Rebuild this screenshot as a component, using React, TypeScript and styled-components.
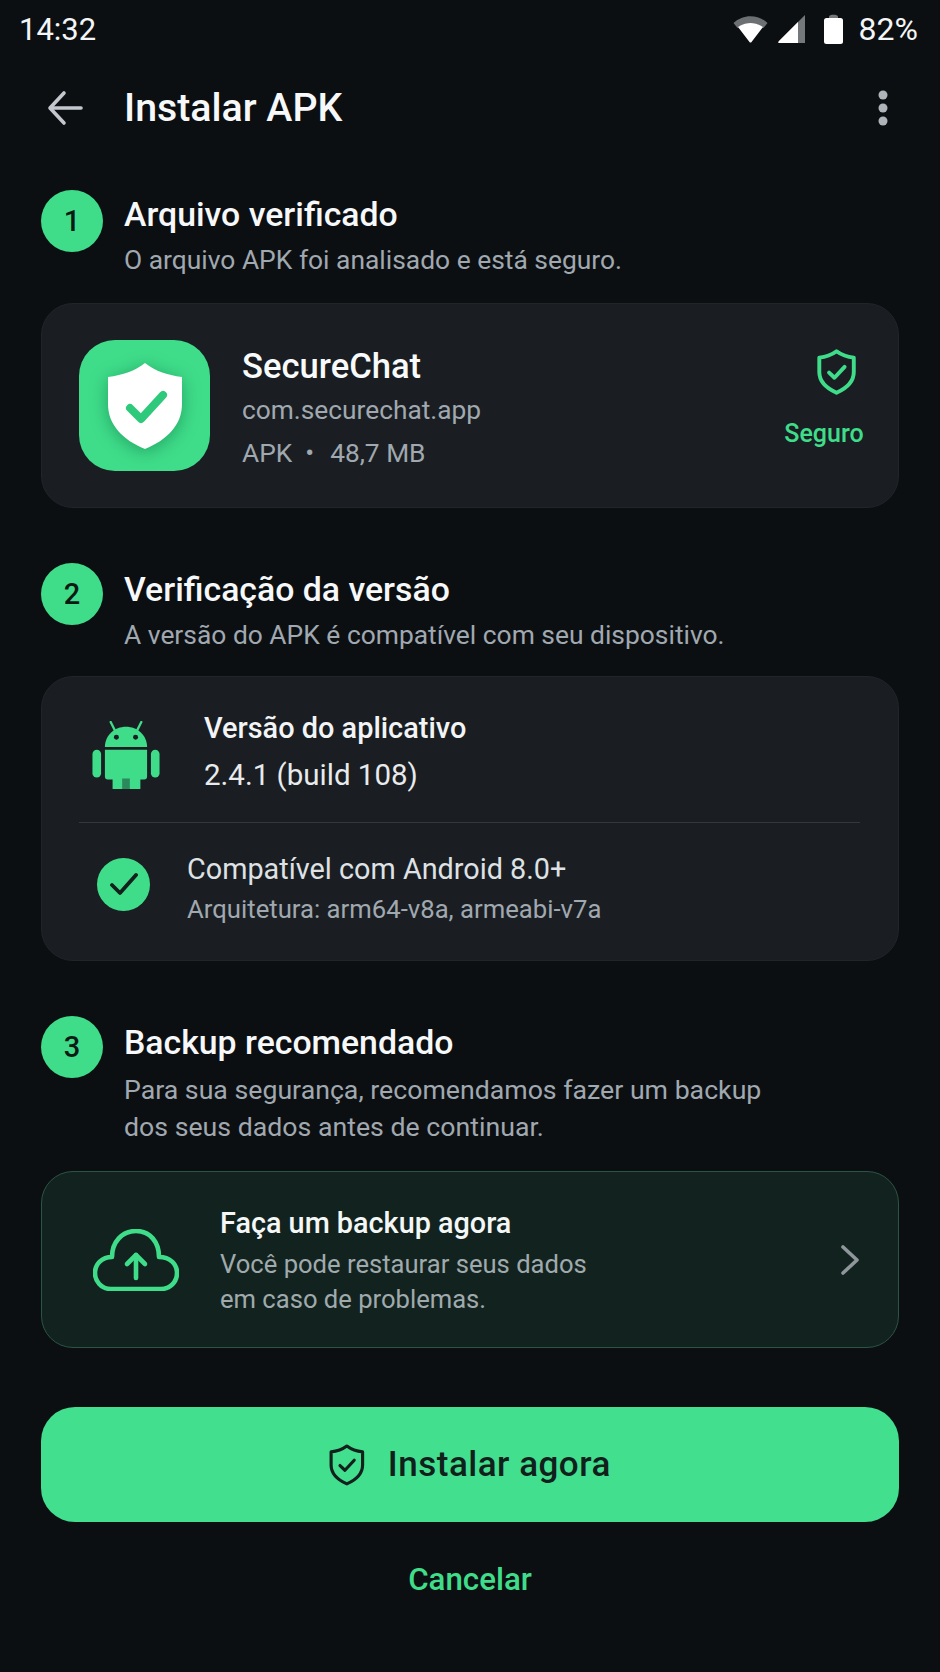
import React from 'react';
import styled, { createGlobalStyle } from 'styled-components';

const green = '#3fdd8a';

const GlobalStyle = createGlobalStyle`
    html, body {
        margin: 0;
        padding: 0;
        background: #0c0f12;
    }
    * {
        box-sizing: border-box;
    }
`;

const Page = styled.div`
    width: 940px;
    height: 1672px;
    background: #0c0f12;
    color: #fff;
    font-family: Roboto, 'Liberation Sans', sans-serif;
    overflow: hidden;
`;

const StatusBar = styled.div`
    height: 54px;
    padding: 4px 22px 0 19px;
    display: flex;
    align-items: center;
    justify-content: space-between;
    font-size: 31px;
    color: #f4f5f6;
`;

const StatusIcons = styled.div`
    display: flex;
    align-items: center;
`;

const CellIcon = styled.svg`
    margin-left: 10px;
`;

const BatteryIcon = styled.svg`
    margin-left: 19px;
`;

const BatteryText = styled.span`
    margin-left: 16px;
    font-size: 32px;
`;

const Header = styled.header`
    height: 76px;
    margin-top: 16px;
    padding: 0 52px 0 47px;
    display: flex;
    align-items: center;
    justify-content: space-between;
`;

const HeaderLeft = styled.div`
    display: flex;
    align-items: center;
    gap: 41px;
`;

const HeaderTitle = styled.h1`
    margin: 0;
    font-size: 39.3px;
    font-weight: 500;
    color: #f7f8f9;
`;

const Content = styled.main`
    padding: 44px 41px 0;
`;

const Step = styled.section<{ $top?: number }>`
    margin-top: ${(p) => p.$top ?? 0}px;
    display: flex;
    gap: 21px;
`;

const StepBadge = styled.div`
    flex: none;
    width: 62px;
    height: 62px;
    border-radius: 50%;
    background: ${green};
    color: #0d1a14;
    font-size: 29px;
    font-weight: 500;
    display: flex;
    align-items: center;
    justify-content: center;
`;

const StepText = styled.div<{ $pad?: number }>`
    padding-top: ${(p) => p.$pad ?? 8}px;
`;

const StepTitle = styled.h2`
    margin: 0;
    font-size: 33.8px;
    line-height: 38px;
    font-weight: 500;
    color: #f7f8f9;
`;

const StepDesc = styled.p<{ $gap?: number; $size?: number }>`
    margin: ${(p) => p.$gap ?? 8}px 0 0;
    font-size: ${(p) => p.$size ?? 26.4}px;
    line-height: 37px;
    color: #a0a8b0;
`;

const Card = styled.div`
    margin-top: 22px;
    background: #1a1e22;
    border: 1px solid #20252a;
    border-radius: 32px;
`;

const AppCard = styled(Card)`
    height: 205px;
    margin-top: 24px;
    padding: 36px 34px 0 37px;
    display: flex;
`;

const AppIcon = styled.div`
    flex: none;
    width: 131px;
    height: 131px;
    border-radius: 36px;
    background: ${green};
    display: flex;
    align-items: center;
    justify-content: center;
`;

const AppShield = styled.svg`
    filter: drop-shadow(0 3px 9px rgba(0, 90, 50, 0.45));
`;

const AppInfo = styled.div`
    flex: 1;
    margin-left: 32px;
    padding-top: 4px;
`;

const AppName = styled.div`
    font-size: 34.6px;
    line-height: 44px;
    font-weight: 500;
    color: #f9fafb;
`;

const AppMeta = styled.div`
    font-size: 26.3px;
    line-height: 41px;
    margin-top: 2px;
    color: #a0a8b0;
`;

const Dot = styled.span`
    margin: 0 16px 0 13px;
`;

const SafeBadge = styled.div`
    width: 80px;
    padding-top: 9px;
    display: flex;
    flex-direction: column;
    align-items: center;
    gap: 24px;
    color: ${green};
    font-size: 25px;
    font-weight: 500;
`;

const SafeShield = styled.div`
    margin-left: 26px;
    height: 46px;
`;

const VersionCard = styled(Card)`
    height: 285px;
    padding: 0 38px 0 37px;
`;

const VersionRow = styled.div`
    height: 146px;
    padding: 4px 0 0 13px;
    display: flex;
    align-items: center;
    gap: 44px;
    border-bottom: 1px solid #33383e;
`;

const AndroidIcon = styled.svg`
    margin-top: 7px;
`;

const RowLabel = styled.div`
    font-size: 28.9px;
    line-height: 36px;
    font-weight: 500;
    color: #f2f4f5;
`;

const RowValue = styled.div`
    font-size: 29.5px;
    line-height: 36px;
    margin-top: 11px;
    color: #e8eaec;
`;

const CompatRow = styled.div`
    height: 122px;
    padding: 0 0 0 18px;
    display: flex;
    align-items: center;
    gap: 37px;
`;

const CompatText = styled.div`
    padding-top: 7px;
`;

const CheckCircle = styled.div`
    flex: none;
    width: 53px;
    height: 53px;
    border-radius: 50%;
    background: ${green};
    display: flex;
    align-items: center;
    justify-content: center;
`;

const CompatTitle = styled.div`
    font-size: 28.8px;
    line-height: 36px;
    color: #dfe2e5;
`;

const CompatSub = styled.div`
    font-size: 25.7px;
    line-height: 32px;
    margin-top: 6px;
    color: #a0a8b0;
`;

const BackupCard = styled(Card)`
    height: 177px;
    margin-top: 25px;
    padding: 0 39px 0 51px;
    display: flex;
    align-items: center;
    background: #12231f;
    border-color: #2b5443;
`;

const BackupText = styled.div`
    flex: 1;
    margin-left: 41px;
    padding-top: 2px;
`;

const BackupTitle = styled.div`
    font-size: 28.8px;
    line-height: 36px;
    font-weight: 500;
    color: #f5f7f7;
`;

const BackupDesc = styled.div`
    font-size: 25.6px;
    line-height: 35px;
    margin-top: 6px;
    color: #a0aaad;
`;

const InstallButton = styled.button`
    width: 100%;
    height: 115px;
    margin-top: 59px;
    border: none;
    border-radius: 34px;
    background: #42df8f;
    color: #11201a;
    font-family: inherit;
    font-size: 35px;
    font-weight: 500;
    letter-spacing: 0.5px;
    display: flex;
    align-items: center;
    justify-content: center;
    gap: 23px;
`;

const CancelButton = styled.button`
    display: block;
    width: 100%;
    margin-top: 35px;
    border: none;
    background: none;
    color: ${green};
    font-family: inherit;
    font-size: 31.3px;
    line-height: 46px;
    font-weight: 500;
    padding: 0;
`;

const ShieldOutline = ({ size, color, sw }: { size: number; color: string; sw: number }) => (
    <svg width={size * 0.85} height={size} viewBox="0 0 34 40" fill="none">
        <path
            d="M17 2 C21 5 26 7 32 7.5 V20 C32 28 26 34 17 38 C8 34 2 28 2 20 V7.5 C8 7 13 5 17 2 Z"
            stroke={color}
            strokeWidth={sw}
            strokeLinejoin="round"
        />
        <path d="M10.5 20.5 L15.2 25 L24 15.5" stroke={color} strokeWidth={sw} strokeLinecap="round" strokeLinejoin="round" />
    </svg>
);

const App: React.FC = () => {
    return (
        <Page>
            <GlobalStyle />
            <StatusBar>
                <span>14:32</span>
                <StatusIcons>
                    <svg width="35" height="28" viewBox="0 0 35 28">
                        <path d="M0.5 8 C10 -1 25 -1 34.5 8 L30.5 13 C22 6.5 13 6.5 4.5 13 Z" fill="#6d7073" />
                        <path d="M5 12 C13 6.5 22 6.5 30 12 L18.5 27 C18 27.7 17 27.7 16.5 27 Z" fill="#fff" />
                    </svg>
                    <CellIcon width="27" height="28" viewBox="0 0 27 28">
                        <path d="M1 28 C0 28 0 27 1 26 L27 0 V28 Z" fill="#75787b" />
                        <path d="M1 28 C0 28 0 27 1 26 L20 7 V28 Z" fill="#fff" />
                    </CellIcon>
                    <BatteryIcon width="19" height="30" viewBox="0 0 19 30">
                        <path d="M5 5 V2.5 C5 0 14 0 14 2.5 V5 Z" fill="#75787b" />
                        <rect x="0" y="4" width="19" height="26" rx="2.5" fill="#fff" />
                    </BatteryIcon>
                    <BatteryText>82%</BatteryText>
                </StatusIcons>
            </StatusBar>

            <Header>
                <HeaderLeft>
                    <svg width="36" height="36" viewBox="0 0 36 36" fill="none" stroke="#c3c8ce" strokeWidth="3.6" strokeLinecap="round" strokeLinejoin="round">
                        <path d="M34 18 H4" />
                        <path d="M17 3 L3 18 L17 33" />
                    </svg>
                    <HeaderTitle>Instalar APK</HeaderTitle>
                </HeaderLeft>
                <svg width="10" height="36" viewBox="0 0 10 36" fill="#aeb4ba">
                    <circle cx="5" cy="5" r="4.5" />
                    <circle cx="5" cy="18" r="4.5" />
                    <circle cx="5" cy="31" r="4.5" />
                </svg>
            </Header>

            <Content>
                <Step>
                    <StepBadge>1</StepBadge>
                    <StepText $pad={6}>
                        <StepTitle>Arquivo verificado</StepTitle>
                        <StepDesc $gap={8}>O arquivo APK foi analisado e está seguro.</StepDesc>
                    </StepText>
                </Step>

                <AppCard>
                    <AppIcon>
                        <AppShield width="76" height="88" viewBox="0 0 76 88">
                            <path d="M38 1 C48 9 60 13 75 15 V42 C75 63 60 78 38 87 C16 78 1 63 1 42 V15 C16 13 28 9 38 1 Z" fill="#fff" />
                            <path d="M23 46 L34 57 L56 33" fill="none" stroke="#2fc97c" strokeWidth="8" strokeLinejoin="round" strokeLinecap="round" />
                        </AppShield>
                    </AppIcon>
                    <AppInfo>
                        <AppName>SecureChat</AppName>
                        <AppMeta>com.securechat.app</AppMeta>
                        <AppMeta>APK<Dot>•</Dot>48,7 MB</AppMeta>
                    </AppInfo>
                    <SafeBadge>
                        <SafeShield>
                            <ShieldOutline size={46} color={green} sw={3.4} />
                        </SafeShield>
                        <span>Seguro</span>
                    </SafeBadge>
                </AppCard>

                <Step $top={55}>
                    <StepBadge>2</StepBadge>
                    <StepText>
                        <StepTitle>Verificação da versão</StepTitle>
                        <StepDesc>A versão do APK é compatível com seu dispositivo.</StepDesc>
                    </StepText>
                </Step>

                <VersionCard>
                    <VersionRow>
                        <AndroidIcon width="68" height="69" viewBox="0 0 70 72" fill={green}>
                            <path d="M19 1 L24 11" stroke={green} strokeWidth="2.4" strokeLinecap="round" />
                            <path d="M51 1 L46 11" stroke={green} strokeWidth="2.4" strokeLinecap="round" />
                            <path d="M13 27 C13 15 23 6 35 6 C47 6 57 15 57 27 Z" />
                            <circle cx="25" cy="17" r="2.6" fill="#1a1e22" />
                            <circle cx="45" cy="17" r="2.6" fill="#1a1e22" />
                            <path d="M13 30 H57 V58 C57 60 56 61 54 61 H50 V71 H21 V61 H16 C14 61 13 60 13 58 Z" />
                            <rect x="31" y="60" width="8" height="11" fill="#2a8a5c" />
                            <rect x="0" y="30" width="9" height="29" rx="4.5" />
                            <rect x="61" y="30" width="9" height="29" rx="4.5" />
                        </AndroidIcon>
                        <div>
                            <RowLabel>Versão do aplicativo</RowLabel>
                            <RowValue>2.4.1 (build 108)</RowValue>
                        </div>
                    </VersionRow>
                    <CompatRow>
                        <CheckCircle>
                            <svg width="28" height="24" viewBox="0 0 28 24" fill="none" stroke="#13201b" strokeWidth="3.8" strokeLinecap="round" strokeLinejoin="round">
                                <path d="M2 13 L10 21 L26 3" />
                            </svg>
                        </CheckCircle>
                        <CompatText>
                            <CompatTitle>Compatível com Android 8.0+</CompatTitle>
                            <CompatSub>Arquitetura: arm64-v8a, armeabi-v7a</CompatSub>
                        </CompatText>
                    </CompatRow>
                </VersionCard>

                <Step $top={55}>
                    <StepBadge>3</StepBadge>
                    <StepText>
                        <StepTitle>Backup recomendado</StepTitle>
                        <StepDesc $gap={10} $size={26.7}>
                            Para sua segurança, recomendamos fazer um backup
                            <br />
                            dos seus dados antes de continuar.
                        </StepDesc>
                    </StepText>
                </Step>

                <BackupCard>
                    <svg width="86" height="62" viewBox="0 0 86 62" fill="none" stroke={green} strokeWidth="4.6" strokeLinecap="round" strokeLinejoin="round">
                        <path d="M18 60 C8 60 2 52 2 44 C2 35 9 28 19 28 C19 13 29 2 43 2 C57 2 66 13 66 28 C77 28 84 35 84 44 C84 53 77 60 68 60 Z" />
                        <path d="M43 49 V26" />
                        <path d="M34 35 L43 26 L52 35" />
                    </svg>
                    <BackupText>
                        <BackupTitle>Faça um backup agora</BackupTitle>
                        <BackupDesc>
                            Você pode restaurar seus dados
                            <br />
                            em caso de problemas.
                        </BackupDesc>
                    </BackupText>
                    <svg width="18" height="30" viewBox="0 0 18 30" fill="none" stroke="#8f979d" strokeWidth="3.6" strokeLinecap="round" strokeLinejoin="round">
                        <path d="M2 2 L16 15 L2 28" />
                    </svg>
                </BackupCard>

                <InstallButton>
                    <ShieldOutline size={42} color="#13201b" sw={3} />
                    Instalar agora
                </InstallButton>
                <CancelButton>Cancelar</CancelButton>
            </Content>
        </Page>
    );
};

export default App;
